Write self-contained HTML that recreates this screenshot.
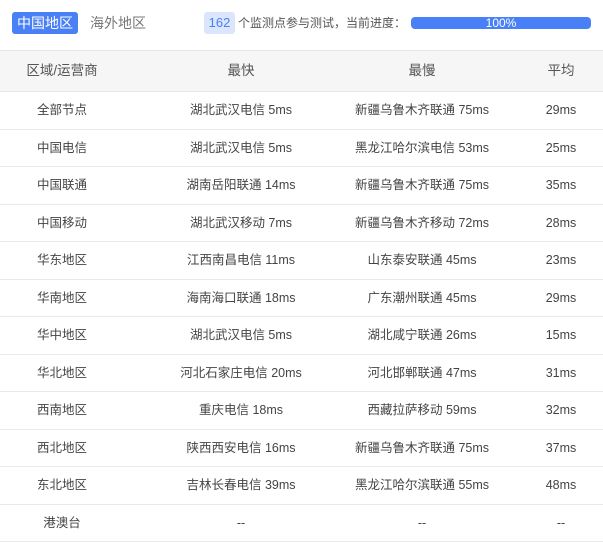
<!DOCTYPE html>
<html><head><meta charset="utf-8"><style>
*{margin:0;padding:0;box-sizing:border-box}
body{width:603px;height:540px;overflow:hidden;background:#fff;font-family:"Liberation Sans","Noto Sans CJK SC",sans-serif;position:relative;color:#444}
.a{position:absolute}
.tab{left:12px;top:12px;width:66px;height:22px;background:#4a80f5;color:#fff;border-radius:3px;font-size:14px;line-height:22px;text-align:center}
.tab2{left:90px;top:12px;font-size:14px;line-height:22px;color:#777}
.badge{left:204px;top:12px;width:31px;height:22px;background:#dbe6fd;color:#4a80f5;border-radius:3px;font-size:13px;line-height:22px;text-align:center}
.info{left:238px;top:12px;font-size:12px;line-height:22px;color:#555}
.bar{left:411px;top:17px;width:180px;height:12px;background:#4a80f7;border-radius:4px;color:#fff;font-size:12px;line-height:12px;text-align:center}
.head{left:0;top:50px;width:603px;height:42px;background:#f6f6f6;border-top:1px solid #e3e6eb;border-bottom:1px solid #e3e6eb}
.row{left:0;width:603px;height:37.5px;border-bottom:1px solid #e8eaee}
.c{position:absolute;width:240px;text-align:center;font-size:12.5px;white-space:nowrap}
.head .c{font-size:13.5px;color:#555;line-height:40px}
.row .c{line-height:37px}
</style></head><body>
<div class="a tab">中国地区</div>
<div class="a tab2">海外地区</div>
<div class="a badge">162</div>
<div class="a info">个监测点参与测试，当前进度：</div>
<div class="a bar">100%</div>
<div class="a head"><div class="c" style="left:-58px">区域/运营商</div><div class="c" style="left:121px">最快</div><div class="c" style="left:302px">最慢</div><div class="c" style="left:441px">平均</div></div>
<div id="rows"></div>
<script>
var d=[["全部节点","湖北武汉电信 5ms","新疆乌鲁木齐联通 75ms","29ms"],["中国电信","湖北武汉电信 5ms","黑龙江哈尔滨电信 53ms","25ms"],["中国联通","湖南岳阳联通 14ms","新疆乌鲁木齐联通 75ms","35ms"],["中国移动","湖北武汉移动 7ms","新疆乌鲁木齐移动 72ms","28ms"],["华东地区","江西南昌电信 11ms","山东泰安联通 45ms","23ms"],["华南地区","海南海口联通 18ms","广东潮州联通 45ms","29ms"],["华中地区","湖北武汉电信 5ms","湖北咸宁联通 26ms","15ms"],["华北地区","河北石家庄电信 20ms","河北邯郸联通 47ms","31ms"],["西南地区","重庆电信 18ms","西藏拉萨移动 59ms","32ms"],["西北地区","陕西西安电信 16ms","新疆乌鲁木齐联通 75ms","37ms"],["东北地区","吉林长春电信 39ms","黑龙江哈尔滨联通 55ms","48ms"],["港澳台","--","--","--"]];
var h="",L=[-58,121,302,441];
d.forEach(function(r,i){h+='<div class="a row" style="top:'+(92+i*37.5)+'px">';r.forEach(function(t,j){h+='<div class="c" style="left:'+L[j]+'px">'+t+'</div>'});h+='</div>'});
document.getElementById("rows").innerHTML=h;
</script>
</body></html>
